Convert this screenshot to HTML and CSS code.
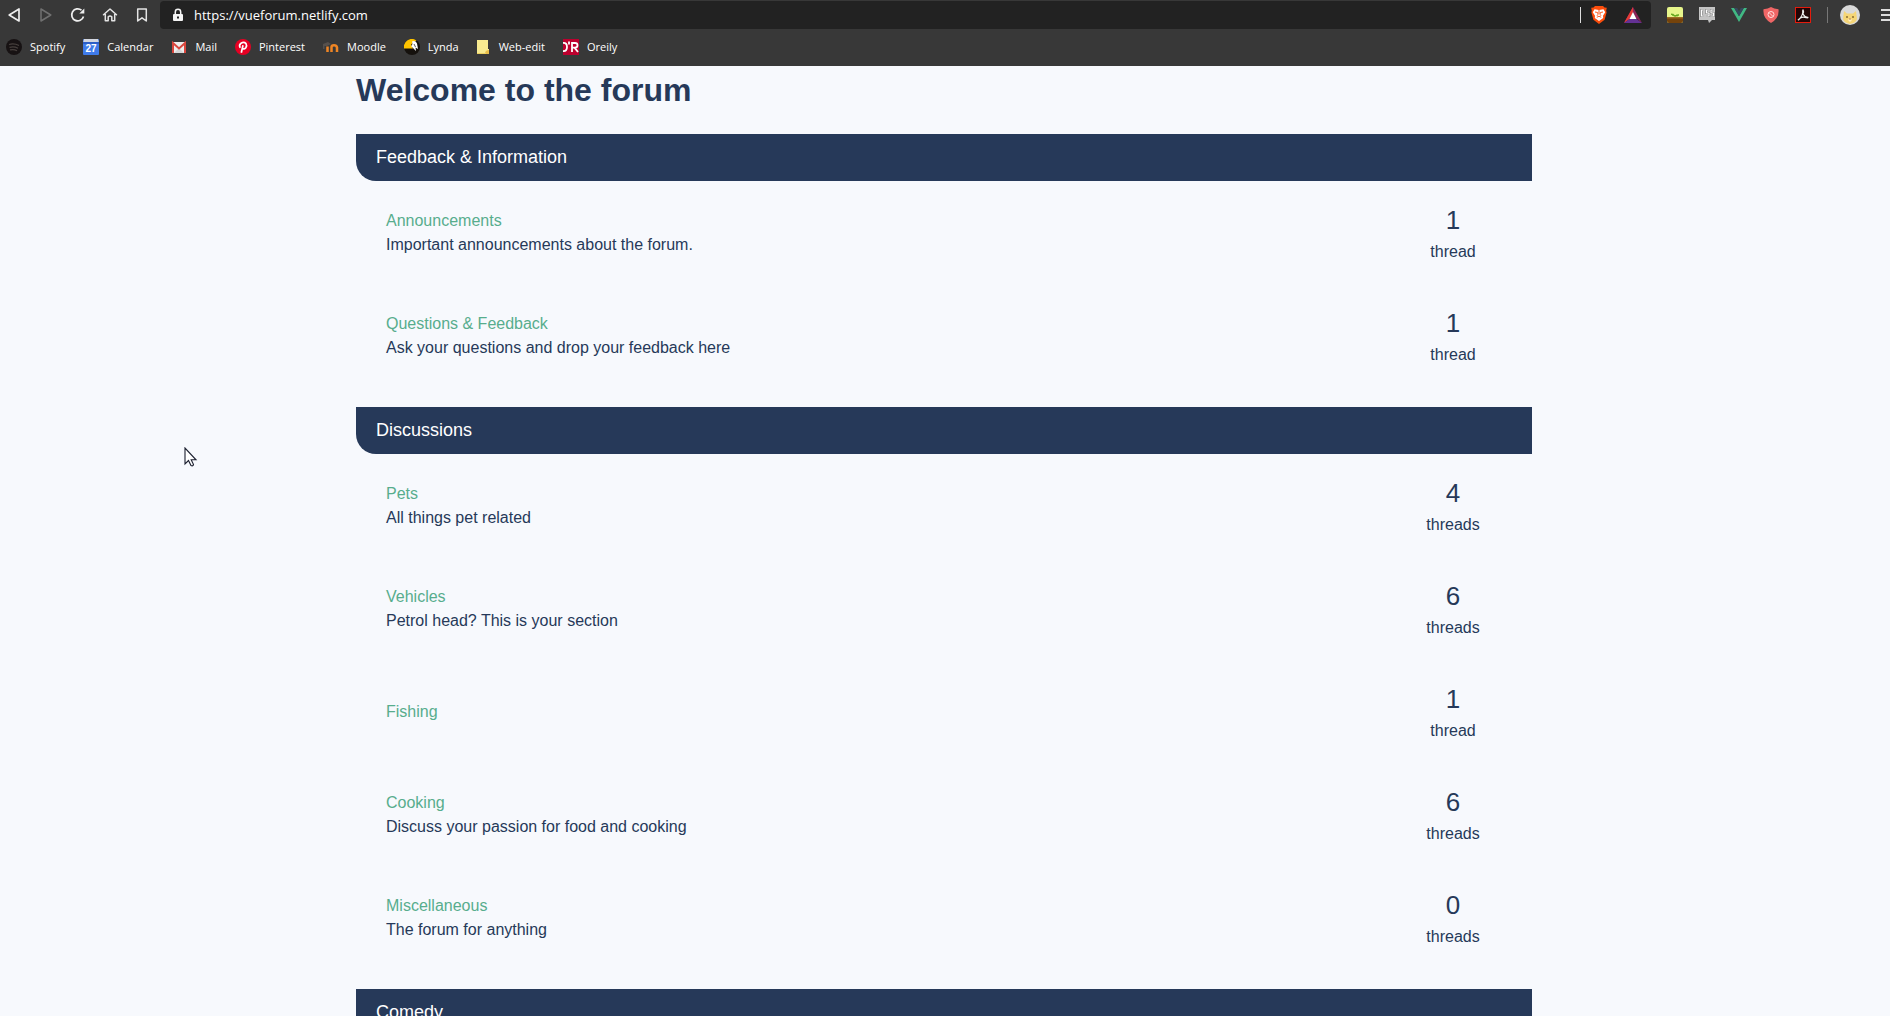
FILE: index.html
```html
<!DOCTYPE html>
<html lang="en">
<head>
<meta charset="utf-8">
<title>Vue Forum</title>
<link rel="stylesheet" href="styles.css">
</head>
<body>
<header class="browser">
  <div class="toolbar">
    <nav class="nav-buttons" aria-label="Browser navigation">
      <button class="icon-button" aria-label="Back"><svg width="14" height="16" viewBox="0 0 14 16"><path d="M12 2v12L2.200 8z" fill="none" stroke="#eee" stroke-width="1.700" stroke-linejoin="round"/></svg></button>
      <button class="icon-button" aria-label="Forward" disabled><svg width="14" height="16" viewBox="0 0 14 16"><path d="M2 2v12L11.800 8z" fill="none" stroke="#707070" stroke-width="1.500" stroke-linejoin="round"/></svg></button>
      <button class="icon-button" aria-label="Reload"><svg width="16" height="16" viewBox="0 0 16 16"><path d="M13.500 9.500A6 6 0 1 1 11.500 3.200" fill="none" stroke="#eee" stroke-width="1.700"/><path d="M14.300 1.500v5H9.300z" fill="#eee"/></svg></button>
      <button class="icon-button" aria-label="Home"><svg width="16" height="16" viewBox="0 0 16 16"><path d="M1.500 7.700L8 2l6.500 5.700M3.300 7v6.700h2.900V9.800q1.800-1.600 3.600 0v3.900h2.900V7" fill="none" stroke="#e4e4e4" stroke-width="1.500" stroke-linejoin="round" stroke-linecap="round"/></svg></button>
      <button class="icon-button" aria-label="Bookmark"><svg width="14" height="16" viewBox="0 0 14 16"><path d="M2.700 2h8.600v12L7 10.800 2.700 14z" fill="none" stroke="#e4e4e4" stroke-width="1.500" stroke-linejoin="round"/></svg></button>
    </nav>
    <div class="address-bar">
      <svg class="lock" width="12" height="14" viewBox="0 0 12 14"><path d="M3.300 6V4a2.700 2.700 0 0 1 5.400 0V6" fill="none" stroke="#f4f4f4" stroke-width="1.500"/><rect x="1" y="6" width="10" height="7" rx="1" fill="#f4f4f4"/><rect x="5" y="8.500" width="2" height="2" fill="#222"/></svg>
      <input class="address" type="text" aria-label="Address" value="https://vueforum.netlify.com">
      <span class="divider divider-light"></span>
      <svg class="brave" width="18" height="20" viewBox="0 0 18 20"><path d="M5 1h8l1.500 1.600 2.300.2-.6 3 .4 1.700-2 7.300L9 19l-5.600-4.200-2-7.300.4-1.700-.6-3 2.300-.2z" fill="#fb4d0c"/><path d="M4.500 4.300L9 4.900l4.500-.6 1.700 3-2.200 3.500.2 2.200L9 16l-4.200-3 .2-2.200-2.200-3.500z" fill="#fff"/><path d="M5 7l2.600.5.4 1.800-1 1.500M13 7l-2.600.5-.4 1.800 1 1.500M9 4.800v4M6.800 12.300L9 11.200l2.200 1.100" fill="none" stroke="#fb4d0c" stroke-width=".9"/></svg>
      <svg width="18" height="16" viewBox="0 0 18 16"><path d="M9 0L0 16l9-7z" fill="#b02563"/><path d="M9 0l9 16-6-5-3-6z" fill="#8b2259"/><path d="M9 0L0 16l5.500-4L9 5z" fill="#e43b35"/><path d="M0 16h18l-5.500-4h-7z" fill="#643194"/><path d="M9 5l3.500 7h-7z" fill="#fff"/></svg>
    </div>
    <div class="extensions">
      <button class="icon-button" aria-label="Sprout extension"><svg width="16" height="16" viewBox="0 0 16 16"><rect width="16" height="16" rx="2" fill="#e6f58b"/><path d="M0 11h16v3q0 2-2 2H2q-2 0-2-2z" fill="#75430b"/><path d="M0 10h16v1.500H0z" fill="#9c6b22"/><path d="M8 10V8.800M8 9Q5.500 9 4 7 7 6.500 8 9q1-1.500 4-1.200Q11 9.500 8 9z" fill="#61a51b" stroke="#61a51b" stroke-width=".8"/></svg></button>
      <button class="icon-button" aria-label="CSS extension"><svg width="16" height="16" viewBox="0 0 16 16"><path d="M0 0h16v13h-3l-3 3-1-3H0z" fill="#c4c4c4"/><path d="M5 3H2.500v6H5M10 3H7.500v3H10v3H7M14.500 3H12v3h2.500v3h-3" fill="none" stroke="#777" stroke-width="2.200"/><path d="M5 3H2.500v6H5M10 3H7.500v3H10v3H7M14.500 3H12v3h2.500v3h-3" fill="none" stroke="#fff" stroke-width="1.200"/></svg></button>
      <button class="icon-button" aria-label="Vue devtools"><svg width="16" height="14" viewBox="0 0 16 14"><path d="M0 0h3.200L8 8.300 12.800 0H16L8 14z" fill="#41b883"/><path d="M3.200 0h3L8 3.200 9.800 0h3L8 8.300z" fill="#35495e"/></svg></button>
      <button class="icon-button" aria-label="Ad blocker"><svg width="16" height="16" viewBox="0 0 16 16"><path d="M8 0q3 2 7.500 2.200Q16.500 11 8 16-.5 11 .5 2.200 5 2 8 0z" fill="#ef6666"/><circle cx="8" cy="7.500" r="3" fill="none" stroke="#ffdede"/><path d="M6 5.500l4 4" stroke="#ffdede"/></svg></button>
      <button class="icon-button" aria-label="Acrobat extension"><svg width="16" height="16" viewBox="0 0 16 16"><rect x=".5" y=".5" width="15" height="15" fill="#210607" stroke="#e41b0c"/><path d="M3.200 12.600Q7 10 7.700 5.500 7.500 2.500 8.200 3q1 2-.2 4 1.500 3 4.700 3.200 1 1-1.500.6Q8 9.300 5 11.300 3.500 13.500 3.200 12.600z" fill="none" stroke="#eee" stroke-width="1.100"/></svg></button>
    </div>
    <span class="divider"></span>
    <button class="avatar" aria-label="Profile"><svg width="20" height="20" viewBox="0 0 20 20"><circle cx="10" cy="10" r="10" fill="#d9d9d9"/><path d="M4 6l3 2.500h6L16 6l1 8q-1 4-7 5-6-1-7-5z" fill="#f5d576"/><path d="M6 12h2m4 0h2" stroke="#896c31" stroke-width="1.300"/><path d="M8 15q2-3 4 0l-2 2z" fill="#fff1c5"/><path d="M9 14h2" stroke="#b77c4d"/></svg></button>
    <button class="menu" aria-label="Menu"><svg width="14" height="14" viewBox="0 0 14 14"><path d="M0 2h14M0 7h14M0 12h14" stroke="#ddd" stroke-width="2"/></svg></button>
  </div>
  <nav class="bookmarks" aria-label="Bookmarks">
    <a class="bookmark" href="#"><svg width="16" height="16" viewBox="0 0 16 16"><circle cx="8" cy="8" r="8" fill="#171213"/><path d="M3 5.500q5-1.500 10 1M3.500 8.300q4.500-1.300 8.500.9M4 10.900q4-1 7 .8" fill="none" stroke="#48413e" stroke-width="1.300"/></svg>Spotify</a>
    <a class="bookmark" href="#"><svg width="16" height="16" viewBox="0 0 16 16"><rect width="16" height="16" rx="1" fill="#3f7bea"/><path d="M1 0h14l1 4H0z" fill="#d2d6df"/><path d="M0 3h16v2H0z" fill="#2b5fc8"/><text class="calendar-day" x="8" y="13" text-anchor="middle">27</text></svg>Calendar</a>
    <a class="bookmark" href="#"><svg width="16" height="16" viewBox="0 0 16 16"><path d="M1 3h14v11H1z" fill="#eee"/><path d="M3 14l5-5 5 5z" fill="#d5d5d5"/><path d="M2 14V4l6 5.500L14 4v10" fill="none" stroke="#d9463d" stroke-width="2"/></svg>Mail</a>
    <a class="bookmark" href="#"><svg width="16" height="16" viewBox="0 0 16 16"><circle cx="8" cy="8" r="8" fill="#e60023"/><path d="M6.300 13.800L8 6.300M5.200 8.800Q3.600 6 6 4.200q3-1.700 5 .4 1.200 2-.2 4.200Q9.300 10.800 7.400 9.300" fill="none" stroke="#fff" stroke-width="1.700"/></svg>Pinterest</a>
    <a class="bookmark" href="#"><svg width="16" height="16" viewBox="0 0 16 16"><path d="M4.500 13V7.500M8.500 13V8q0-1.800 2.500-1.800T14 8.500V13" fill="none" stroke="#ef8524" stroke-width="2.500"/><path d="M0 5l5-2 3 2-4 2H1.500v3H0z" fill="#55504d"/></svg>Moodle</a>
    <a class="bookmark" href="#"><svg width="16" height="16" viewBox="0 0 16 16"><circle cx="8" cy="8" r="8" fill="#15110d"/><path d="M0 9.500A8 8 0 0 1 12.500 1.500L9 3 7 6l2 3.500z" fill="#ffc400"/><path d="M8 2.500q3.500-1.500 5 2L14 10l-2.500-1.500L12 12l-3-3-2-2q2-1 1-4.500z" fill="#fff"/><path d="M10 5l1.500 3" stroke="#333" stroke-width=".8"/></svg>Lynda</a>
    <a class="bookmark" href="#"><svg width="14" height="14" viewBox="0 0 14 14"><path d="M0 0h11v9h1v5H0z" fill="#f8ea90"/><path d="M8 14q0-4 4-4v4z" fill="#e9bd48"/><path d="M0 13.500h9" stroke="#ecd061"/></svg>Web-edit</a>
    <a class="bookmark" href="#"><svg width="16" height="16" viewBox="0 0 16 16"><path d="M0 0h16v16H0z" fill="#bd002e"/><path d="M0 4q4-.5 4 4t-4 4M6 2.500v3M9 13V4h3q2.500 0 2.500 2.300T12 8.600H9m2.500 0L15 13" fill="none" stroke="#fff" stroke-width="1.800"/></svg>Oreily</a>
  </nav>
</header>
<main class="page">
  <div class="forum">
    <h1 class="title">Welcome to the forum</h1>
    <section class="category">
      <h2 class="category-name">Feedback &amp; Information</h2>
      <ul class="forum-list">
        <li class="forum-row"><div class="details"><a class="forum-link" href="#">Announcements</a><p class="description">Important announcements about the forum.</p></div><p class="threads"><span class="count">1</span>thread</p></li>
        <li class="forum-row"><div class="details"><a class="forum-link" href="#">Questions &amp; Feedback</a><p class="description">Ask your questions and drop your feedback here</p></div><p class="threads"><span class="count">1</span>thread</p></li>
      </ul>
    </section>
    <section class="category">
      <h2 class="category-name">Discussions</h2>
      <ul class="forum-list">
        <li class="forum-row"><div class="details"><a class="forum-link" href="#">Pets</a><p class="description">All things pet related</p></div><p class="threads"><span class="count">4</span>threads</p></li>
        <li class="forum-row"><div class="details"><a class="forum-link" href="#">Vehicles</a><p class="description">Petrol head? This is your section</p></div><p class="threads"><span class="count">6</span>threads</p></li>
        <li class="forum-row"><div class="details"><a class="forum-link" href="#">Fishing</a></div><p class="threads"><span class="count">1</span>thread</p></li>
        <li class="forum-row"><div class="details"><a class="forum-link" href="#">Cooking</a><p class="description">Discuss your passion for food and cooking</p></div><p class="threads"><span class="count">6</span>threads</p></li>
        <li class="forum-row"><div class="details"><a class="forum-link" href="#">Miscellaneous</a><p class="description">The forum for anything</p></div><p class="threads"><span class="count">0</span>threads</p></li>
      </ul>
    </section>
    <section class="category">
      <h2 class="category-name">Comedy</h2>
    </section>
  </div>
</main>
<svg class="cursor" width="14" height="20" viewBox="0 0 14 20"><path d="M1 1v16l3.500-3.500 2.500 5q2 1 2.500-1l-2.300-4.700H12z" fill="#fff" stroke="#1c2030" stroke-width="1.100"/></svg>
</body>
</html>
```
FILE: styles.css
```css
* {
  box-sizing: border-box;
}

body {
  display: flex;
  flex-direction: column;
  height: 100vh;
  margin: 0;
  overflow: hidden;
  background: #f7f9fd;
  color: #263959;
  font: 16px/24px "Liberation Sans", Arial, sans-serif;
}

h1, h2, p, ul {
  margin: 0;
  padding: 0;
}

button {
  flex: none;
  padding: 0;
  border: 0;
  background: none;
}

svg {
  display: block;
  flex: none;
}

/* Browser chrome */
.browser {
  flex: none;
  height: 66px;
  background: #383838;
  color: #fff;
  font-family: "Open Sans", "Noto Sans", sans-serif;
}

.toolbar {
  display: flex;
  align-items: center;
  height: 30px;
  overflow: hidden;
}

.nav-buttons {
  display: flex;
  gap: 8px;
  padding: 0 6px 0 2px;
}

.icon-button {
  display: grid;
  place-items: center;
  width: 24px;
  height: 24px;
}

.address-bar {
  display: flex;
  flex: 1;
  align-items: center;
  height: 28px;
  padding: 0 9px 0 12px;
  border-radius: 4px;
  background: #222;
}

.address {
  flex: 1;
  min-width: 0;
  margin-left: 10px;
  padding: 0;
  border: 0;
  outline: 0;
  background: none;
  color: #fff;
  font: 13px/20px "Open Sans", "Noto Sans", sans-serif;
}

.divider {
  flex: none;
  width: 1px;
  height: 16px;
  background: #777;
}

.divider-light {
  background: #ddd;
}

.brave {
  margin: 0 16px 0 9px;
}

.extensions {
  display: flex;
  gap: 8px;
  padding: 0 12px;
}

.avatar {
  margin: 0 21px 0 12px;
}

.menu {
  width: 9px;
  overflow: hidden;
}

.bookmarks {
  display: flex;
  align-items: center;
  gap: 18px;
  height: 34px;
  padding-left: 6px;
}

.bookmark {
  display: flex;
  align-items: center;
  gap: 8px;
  color: #fff;
  font-size: 11px;
  line-height: 16px;
  text-decoration: none;
}

.calendar-day {
  fill: #fff;
  font: bold 10px "Liberation Sans", sans-serif;
}

/* Forum page */
.page {
  flex: 1;
  min-height: 0;
  padding: 0 2px 0 0;
  overflow: hidden;
}

.forum {
  max-width: 1176px;
  margin: 0 auto;
}

.title {
  padding: 4px 0 24px;
  font-size: 32px;
  line-height: 40px;
}

.category {
  margin-bottom: 20px;
}

.category-name {
  padding: 10px 20px;
  border-bottom-left-radius: 20px;
  background: #263959;
  color: #fff;
  font-size: 18px;
  font-weight: 400;
  line-height: 27px;
}

.forum-list {
  list-style: none;
}

.forum-row {
  display: flex;
  align-items: center;
  min-height: 103px;
  padding: 0 30px;
}

.details {
  flex: 1;
}

.forum-link {
  color: #57ad8d;
  text-decoration: none;
}

.threads {
  width: 98px;
  text-align: center;
}

.count {
  display: block;
  font-size: 26px;
  line-height: 39px;
}

.cursor {
  position: absolute;
  top: 447px;
  left: 184px;
}
```
